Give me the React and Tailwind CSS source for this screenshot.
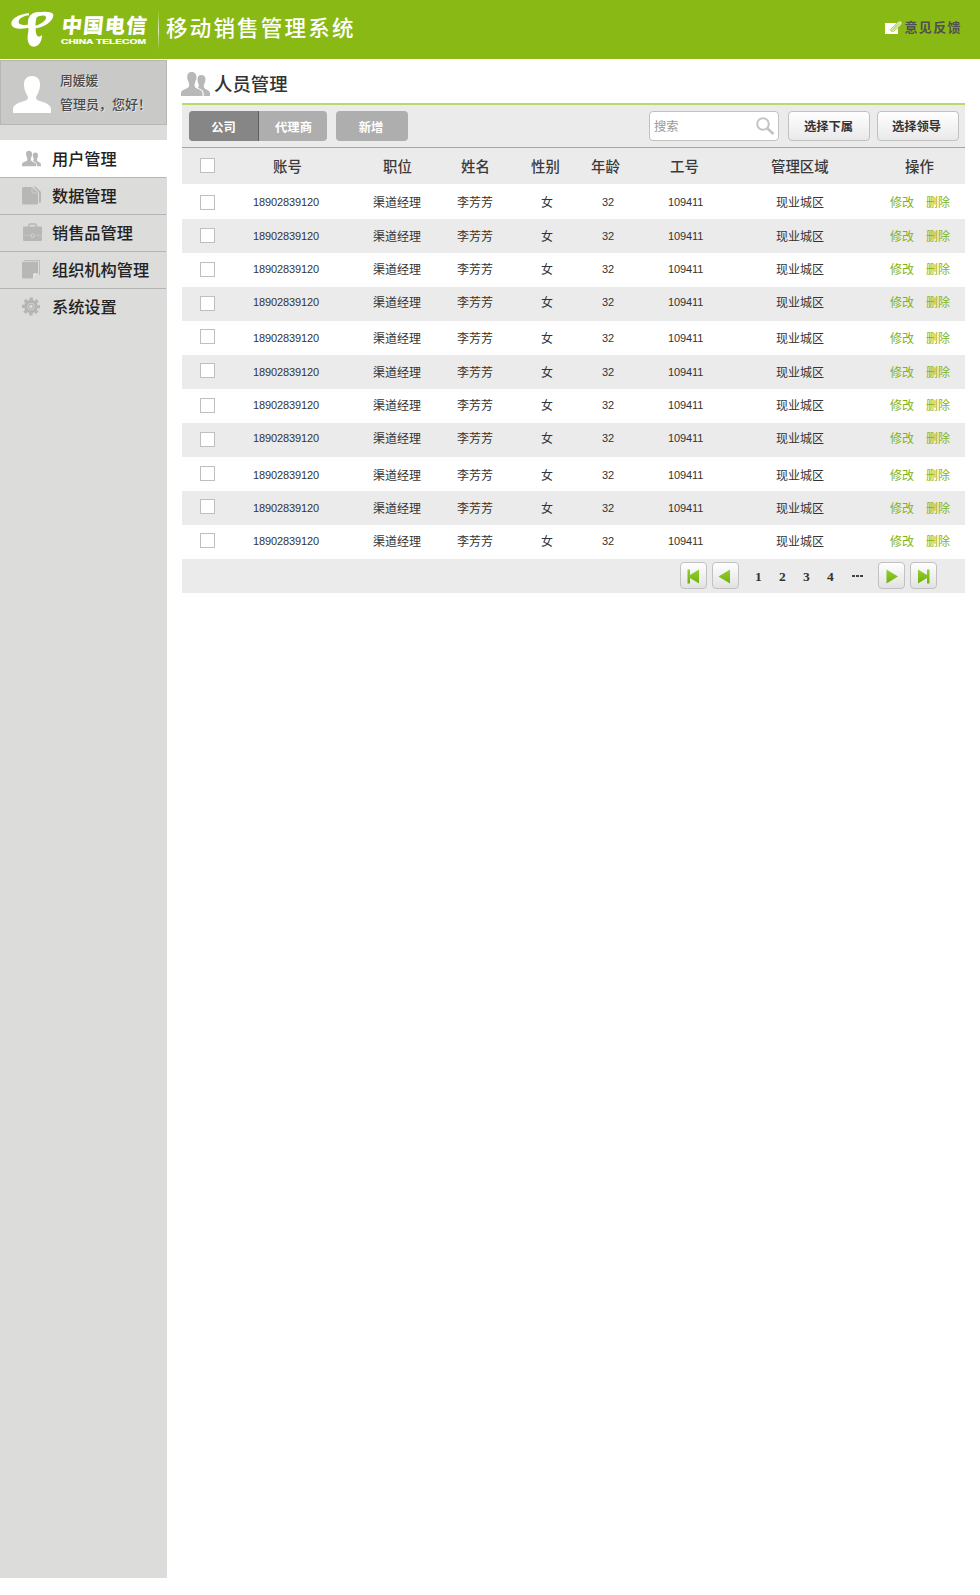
import React from "react";

const MENU = [
  { label: "用户管理", icon: "users", active: true },
  { label: "数据管理", icon: "files" },
  { label: "销售品管理", icon: "case" },
  { label: "组织机构管理", icon: "note" },
  { label: "系统设置", icon: "gear" },
];

// Vertical placement of the checkbox and the text inside each row, in pixels.
const ROWS = [
  { height: 35, box: 11, text: 10 },
  { height: 34, box: 9, text: 9 },
  { height: 34, box: 9, text: 8 },
  { height: 34, box: 9, text: 7 },
  { height: 34, box: 8, text: 9 },
  { height: 34, box: 8, text: 9 },
  { height: 34, box: 9, text: 8 },
  { height: 34, box: 9, text: 7 },
  { height: 34, box: 9, text: 10 },
  { height: 34, box: 8, text: 9 },
  { height: 34, box: 8, text: 8 },
];

function Users({ className }) {
  return (
    <svg viewBox="0 0 29 24" className={className} fill="#b8b8b8">
      <path d="M10.500 0C7.500 0 6 2 6.200 5c0 1.500.3 2.500.8 3.500.5 2 1.200 3 1.200 4.500 0 2-1 2.800-3.200 3.700C1.500 18 0 19 0 21v3h21.500v-2.500c0-2.300-1.500-3.200-5-4.700-2.200-1-3-1.800-3-3.800 0-1.500.8-2.500 1.200-4.500.5-1 .8-2 .8-3.500C15.500 2 13.500 0 10.500 0z" />
      <path d="M20.500 3c-3 0-4 2-4 4.500 0 2.200.7 3.300 1.200 5 .4 1.500 0 2.800-1 3.300 4 1.700 6 3 6 6V24H29v-2.500c0-2-1.200-3-3.500-4-2.200-1-2.700-1.700-2.700-3.500 0-1.200.7-2 1-3.500.5-1 .7-2 .7-3C24.500 4.800 23.200 3 20.500 3z" />
    </svg>
  );
}

function MenuIcon({ name }) {
  if (name === "users") return <Users className="mt-px h-[17px] w-[19px]" />;
  return (
    <svg viewBox="0 0 20 19" className="h-[19px] w-5" fill="#b7b7b6">
      {name === "files" && (
        <>
          <path d="M0 2.500Q0 1 1.500 1H10l6 5.500V17q0 1.500-1.500 1.500h-13Q0 18.500 0 17z" />
          <path d="M11.500.5h2L19 6v9.500q0 1.500-2 1.500V6.800z" />
          <path d="M10 2v5h5.500" fill="none" stroke="#d0d0ce" strokeWidth=".9" />
        </>
      )}
      {name === "case" && (
        <>
          <path d="M7 4V1.700q0-.7.7-.7h5.600q.7 0 .7.700V4" fill="none" stroke="#b7b7b6" strokeWidth="1.500" />
          <rect x="1" y="3.500" width="19" height="14.500" rx="1.300" />
          <path d="M1 12.500h7.500M12.500 12.500H20" stroke="#c6c6c4" strokeWidth=".8" />
          <rect x="9.200" y="10.700" width="2.600" height="3.800" rx="1" fill="none" stroke="#d6d6d4" strokeWidth=".9" />
        </>
      )}
      {name === "note" && (
        <>
          <path d="M2 .5h15.500v14.500" fill="none" stroke="#bdbdbc" strokeWidth="1" />
          <path d="M0 3q0-1.300 1.300-1.300h14.700v11.300L10.500 18.500H1.500Q0 18.500 0 17z" />
          <path d="M16 13.200l-5 5v-4q0-1 1-1z" fill="#e4e4e2" />
        </>
      )}
      {name === "gear" && (
        <>
          <circle cx="9" cy="9.500" r="5.200" fill="none" stroke="#b5b5b4" strokeWidth="3.200" />
          <circle cx="9" cy="9.500" r="7.700" fill="none" stroke="#b5b5b4" strokeWidth="2.600" strokeDasharray="3.400 2.647" strokeDashoffset="1.700" />
          <circle cx="9" cy="9.500" r="2.300" fill="none" stroke="#b5b5b4" strokeWidth="1.300" />
        </>
      )}
    </svg>
  );
}

function TelecomLogo() {
  return (
    <svg viewBox="0 0 148 48" className="h-12 w-[148px] shrink-0" fill="#fff">
      <g transform="scale(.33333) translate(24 18)">
        <path d="M62 21C30 25 8 40 10 54C12 71 45 71 68 64L66 55C48 59 31 57 32 47C34 36 48 29 64 28Z" />
        <path d="M98 19C78 15 62 26 60 46C58 60 64 70 60 82C56 102 61 123 78 122C94 120 102 104 102 86C96 94 88 94 85 84C82 72 82 52 84 42C86 30 90 25 98 23Z" />
        <path d="M90 19C108 16 134 17 136 26C137 46 108 64 78 68L80 60C98 56 117 42 114 33C110 26 96 28 86 34Z" />
      </g>
      <text transform="translate(61 33) skewX(-6)" fontFamily='"Noto Sans CJK SC", sans-serif' fontWeight="900" fontSize="20.500" textLength="85" lengthAdjust="spacing">中国电信</text>
      <text x="61" y="44.200" fontFamily='"Liberation Sans", sans-serif' fontWeight="bold" fontSize="7.200" textLength="85" lengthAdjust="spacingAndGlyphs" stroke="#fff" strokeWidth=".2">CHINA TELECOM</text>
    </svg>
  );
}

function Box({ className = "" }) {
  return <span className={"block size-[15px] border border-[#bfbfbf] bg-white " + className} />;
}

function PageButton({ children, className = "" }) {
  return (
    <button className={"flex size-[27px] items-center justify-center rounded border border-[#c1c1c1] bg-gradient-to-b from-white to-[#e2e2e2] " + className}>
      <svg viewBox="0 0 17 17" className="mt-px size-[17px]">
        <defs>
          <linearGradient id="leaf" x1="0" y1="0" x2="0" y2="1">
            <stop offset="0" stopColor="#94d02b" />
            <stop offset="1" stopColor="#71b10c" />
          </linearGradient>
        </defs>
        <g fill="url(#leaf)">{children}</g>
      </svg>
    </button>
  );
}

export default function App() {
  return (
    <div className="h-[1595px] w-[980px] overflow-hidden bg-white font-['Noto_Sans_CJK_SC',sans-serif] text-[#333]">
      <header className="flex h-[59px] bg-[#89b915]">
        <TelecomLogo />
        <span className="ml-[10px] mt-[10px] h-10 w-px bg-gradient-to-b from-transparent via-[#e4eec8] to-transparent" />
        <h1 className="ml-[7px] mt-[11px] whitespace-nowrap text-[21.5px] font-medium leading-8 tracking-[2.2px] text-white">移动销售管理系统</h1>
        <a className="ml-auto mr-[18px] mt-[17px] flex h-5 items-center text-[13px] font-bold leading-5 tracking-[1.4px] text-[#505050]">
          <svg viewBox="0 0 18 15" className="h-[15px] w-[18px]">
            <path d="M0 3h13v11H0z" fill="#fff" />
            <path d="M6 9l7-7q2-1.500 3.500 0 .8 1.600-.7 3L9 11q-2 1-3 0-1-.8 0-2z" fill="#dcebb5" stroke="#a9cc58" strokeWidth=".9" />
            <path d="M8 9.500l6-6" stroke="#9fc545" strokeWidth=".9" />
          </svg>
          <span className="ml-px">意见反馈</span>
        </a>
      </header>

      <div className="flex">
        <aside className="mt-px h-[1518px] w-[167px] shrink-0 bg-[#dcdcda]">
          <div className="flex h-[65px] border border-[#b6b6b5] bg-[#c9c9c8]">
            <svg viewBox="0 0 38 37" className="ml-3 mt-[15px] h-[37px] w-[38px]" fill="#fff">
              <path d="M19 0c-5.500 0-8.500 4-8 9.500.2 3 .8 4.500 1.500 6.500.8 2.500 2.500 3.500 2.500 5.500 0 2.500-2 3-5.500 4C3.500 27.500 0 29.500 0 33.500V37h38v-3.500c0-4-3.500-6-9.500-8-3.500-1-5.500-1.500-5.500-4 0-2 1.700-3 2.500-5.500.7-2 1.300-3.500 1.500-6.500C27.500 4 24.500 0 19 0z" />
            </svg>
            <div className="ml-[9px] mt-[7px] whitespace-nowrap text-[13px] font-medium leading-6 text-[#4a4a4a] [text-shadow:1px_1px_0_#e6e6e6]">
              <p className="text-[12.8px]">周媛媛</p>
              <p>管理员，您好！</p>
            </div>
          </div>
          <nav className="mt-[15px]">
            {MENU.map((m, i) => (
              <a
                key={m.label}
                className={
                  "flex h-[37px] items-center whitespace-nowrap pb-[2px] text-[16.2px] font-medium leading-6 text-[#222] " +
                  (m.active ? "bg-white " : "") +
                  (i > 0 ? "mr-px border-t border-[#b5b5b5] " : "")
                }
              >
                <span className={"ml-[22px] flex w-[30px] " + (m.active ? "pt-px" : "")}><MenuIcon name={m.icon} /></span>
                {m.label}
              </a>
            ))}
          </nav>
        </aside>

        <main className="ml-[15px] w-[783px]">
          <div className="flex h-11 items-start">
            <Users className="-ml-px mt-[13px] h-6 w-[29px]" />
            <h2 className="ml-[4px] mt-[10px] text-[18.4px] font-medium leading-7">人员管理</h2>
          </div>

          <section className="flex h-[45px] items-start border-b border-t-2 border-b-[#a5a5a5] border-t-[#b7d96e] bg-[#ebebeb] pl-[7px] pt-[6px] text-[12.3px] font-bold text-white">
            <div className="flex h-[30px] overflow-hidden rounded bg-[#aeaeae] text-center leading-[32px]">
              <button className="w-[70px] border-r border-[#5f5f5f] bg-[#868686]">公司</button>
              <button className="w-[68px] pl-px">代理商</button>
            </div>
            <button className="ml-[9px] h-[30px] w-[72px] rounded bg-[#aeaeae] leading-[32px]"><span className="-ml-[2px]">新增</span></button>
            <div className="ml-auto flex h-[30px] w-[130px] items-center justify-between rounded border border-[#c1c1c1] bg-white pl-[4px] pr-[3px] font-normal text-[#999]">
              搜索
              <svg viewBox="0 0 19 18" className="h-[18px] w-[19px]" fill="none" stroke="#c4c4c4">
                <circle cx="7" cy="7" r="5.800" strokeWidth="2" />
                <path d="M11.500 11.500l6 5.500" strokeWidth="2.800" />
              </svg>
            </div>
            <button className="ml-[9px] h-[30px] w-[82px] rounded border border-[#c1c1c1] bg-gradient-to-b from-white to-[#e9e9e9] pr-px text-[#333]">选择下属</button>
            <button className="ml-[7px] mr-[6px] h-[30px] w-[82px] rounded border border-[#c1c1c1] bg-gradient-to-b from-white to-[#e9e9e9] pr-[3px] text-[#333]">选择领导</button>
          </section>

          <div className="grid h-9 grid-cols-[73px_110px_78px_70px_60px_79px_101px_134px_1fr] items-center whitespace-nowrap bg-[#ebebeb] pl-[18px] text-[14.4px] font-medium leading-6 text-[#3a3a3a]">
            <Box className="-mt-px" />
            {["账号", "职位", "姓名", "性别", "年龄", "工号", "管理区域", "操作"].map((h) => (
              <span key={h}>{h}</span>
            ))}
          </div>

          {ROWS.map((r, i) => (
            <div
              key={i}
              className={
                "grid grid-cols-[53px_120px_84px_84px_61px_66px_108px_114px_36px_24px] items-start whitespace-nowrap pl-[18px] text-[12px] leading-4 " +
                (i % 2 ? "bg-[#ebebeb]" : "bg-white")
              }
              style={{ height: r.height }}
            >
              <div style={{ paddingTop: r.box }}><Box /></div>
              <div className="col-span-9 grid grid-cols-subgrid" style={{ paddingTop: r.text }}>
                <span className="font-['Liberation_Sans',sans-serif] text-[11px] leading-4 tracking-[-0.12px]">18902839120</span>
                <span>渠道经理</span>
                <span>李芳芳</span>
                <span>女</span>
                <span className="font-['Liberation_Sans',sans-serif] text-[11px] leading-4">32</span>
                <span className="font-['Liberation_Sans',sans-serif] text-[11px] leading-4 tracking-[-0.12px]">109411</span>
                <span>现业城区</span>
                <a className="text-[#84b414]">修改</a>
                <a className="text-[#84b414]">删除</a>
              </div>
            </div>
          ))}

          <footer className="flex h-[34px] items-start bg-[#ebebeb] pl-[498px] pt-[3px]">
            <PageButton>
              <path d="M2.500 1.500H5V7l9-5.500v14L5 10v5.500H2.500z" />
            </PageButton>
            <PageButton className="ml-[5px]">
              <path d="M13 1.500v14L1.500 8.500z" />
            </PageButton>
            <div className="ml-4 grid h-[27px] w-[123px] grid-cols-[24px_24px_24px_25px_1fr] font-['Liberation_Serif',serif] text-[13.5px] font-bold leading-[29px]">
              <span>1</span>
              <span>2</span>
              <span>3</span>
              <span>4</span>
              <span className="flex gap-[1px] pt-[13px]">
                <i className="h-[2px] w-[3px] bg-[#444]" />
                <i className="h-[2px] w-[3px] bg-[#444]" />
                <i className="h-[2px] w-[3px] bg-[#444]" />
              </span>
            </div>
            <PageButton>
              <path d="M3.500 1.500v14L15 8.500z" />
            </PageButton>
            <PageButton className="ml-[5px]">
              <path d="M14.500 1.500H12V7L3 1.500v14l9-5.500v5.500h2.500z" />
            </PageButton>
          </footer>
        </main>
      </div>
    </div>
  );
}
